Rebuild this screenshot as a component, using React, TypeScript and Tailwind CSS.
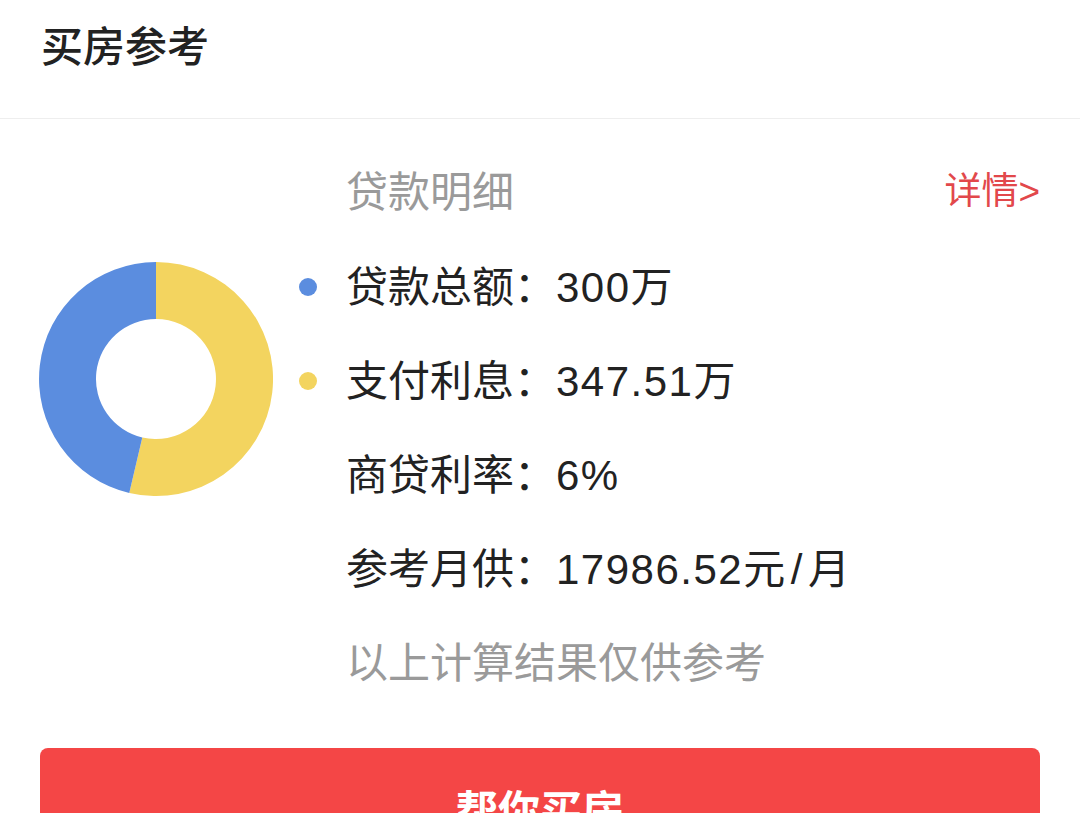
import React from "react";

const FONT = '"Liberation Sans", "Noto Sans CJK SC", sans-serif';

interface Row {
  dot?: string;
  label: string;
  value: React.ReactNode;
}

const rows: Row[] = [
  { dot: "#5b8ddf", label: "贷款总额：", value: "300万" },
  { dot: "#f3d45f", label: "支付利息：", value: "347.51万" },
  { label: "商贷利率：", value: "6%" },
  {
    label: "参考月供：",
    value: (
      <>
        17986.52元<span className="mx-[4px]">/</span>月
      </>
    ),
  },
];

function Donut() {
  return (
    <svg width="234" height="234" viewBox="0 0 234 234">
      {/* yellow = interest share (~53.7%) */}
      <path
        d="M117 0 A117 117 0 1 1 90.28 230.9 L103.3 175.42 A60 60 0 1 0 117 57 Z"
        fill="#f3d45f"
      />
      <path
        d="M90.28 230.9 A117 117 0 0 1 117 0 L117 57 A60 60 0 0 0 103.3 175.42 Z"
        fill="#5b8ddf"
      />
    </svg>
  );
}

export default function App() {
  return (
    <div className="w-[1080px] h-[813px] overflow-hidden bg-white" style={{ fontFamily: FONT }}>
      {/* Header */}
      <div className="h-[118px] pt-[22px] px-[41px]">
        <h1 className="text-[42px] leading-[52px] font-medium text-[#222]">买房参考</h1>
      </div>
      <div className="h-px bg-[#eeeeee]" />

      {/* Loan details */}
      <div className="flex pt-[25px] pl-[39px] pr-[40px]">
        <div className="mt-[118px] shrink-0">
          <Donut />
        </div>
        <div className="flex-1 ml-[26px]">
          <div className="h-[96px] flex items-center">
            <div className="w-[18px] shrink-0" />
            <div className="ml-[29px] flex-1 text-[42px] text-[#9a9a9a]">贷款明细</div>
            <div className="text-[37px] text-[#e2484b]">详情&gt;</div>
          </div>
          {rows.map((r, i) => (
            <div key={i} className="h-[94px] flex items-center">
              <div
                className="w-[18px] h-[18px] rounded-full shrink-0"
                style={{ background: r.dot ?? "transparent" }}
              />
              <div className="ml-[29px] text-[42px] text-[#222] whitespace-nowrap">
                {r.label}
                <span className="tracking-[1.5px]">{r.value}</span>
              </div>
            </div>
          ))}
          <div className="h-[94px] flex items-center">
            <div className="w-[18px] shrink-0" />
            <div className="ml-[29px] text-[42px] text-[#9a9a9a]">以上计算结果仅供参考</div>
          </div>
        </div>
      </div>

      {/* Action */}
      <div className="px-[40px] mt-[38px]">
        <button className="w-full h-[110px] rounded-[8px] bg-[#f44646] text-white text-[42px] font-bold pt-[16px]">
          帮你买房
        </button>
      </div>
    </div>
  );
}
